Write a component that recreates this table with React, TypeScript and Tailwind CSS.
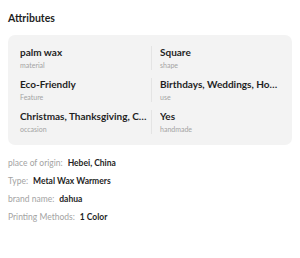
import React from "react";

const attributes = [
  { value: "palm wax", label: "material" },
  { value: "Square", label: "shape" },
  { value: "Eco-Friendly", label: "Feature" },
  { value: "Birthdays, Weddings, Homecoming, Holidays", label: "use" },
  { value: "Christmas, Thanksgiving, Chinese New Year", label: "occasion" },
  { value: "Yes", label: "handmade" },
];

const details = [
  { label: "place of origin:", value: "Hebei, China" },
  { label: "Type:", value: "Metal Wax Warmers" },
  { label: "brand name:", value: "dahua" },
  { label: "Printing Methods:", value: "1 Color" },
];

export default function App() {
  return (
    <div
      className="w-[300px] h-[258px] bg-white px-2 pt-[12px] text-[#1f1f1f]"
      style={{ fontFamily: "Lato, 'Noto Sans', sans-serif" }}
    >
      <h2 className="text-[10.5px] leading-[12px] font-bold">Attributes</h2>
      <div className="mt-[11px] rounded-[7px] bg-[#f3f3f3] px-3 pt-[11px] pb-[11px]">
        <div className="grid grid-cols-[131px_1fr] gap-y-[8px]">
          {attributes.map((a, i) => (
            <div
              key={a.label}
              className={
                i % 2 === 1
                  ? "min-w-0 border-l border-[#e4e4e4] pl-[8px]"
                  : "min-w-0 pr-[3px]"
              }
            >
              <div className="truncate text-[10px] leading-[12px] font-bold">
                {a.value}
              </div>
              <div className="mt-[2px] text-[7px] leading-[10px] text-[#a3a3a3]">
                {a.label}
              </div>
            </div>
          ))}
        </div>
      </div>
      <div className="mt-[13px] flex flex-col gap-[7px]">
        {details.map((d) => (
          <div key={d.label} className="flex items-center gap-[5px] text-[8.5px] leading-[11px]">
            <span className="text-[#a3a3a3]">{d.label}</span>
            <span className="font-bold">{d.value}</span>
          </div>
        ))}
      </div>
    </div>
  );
}
